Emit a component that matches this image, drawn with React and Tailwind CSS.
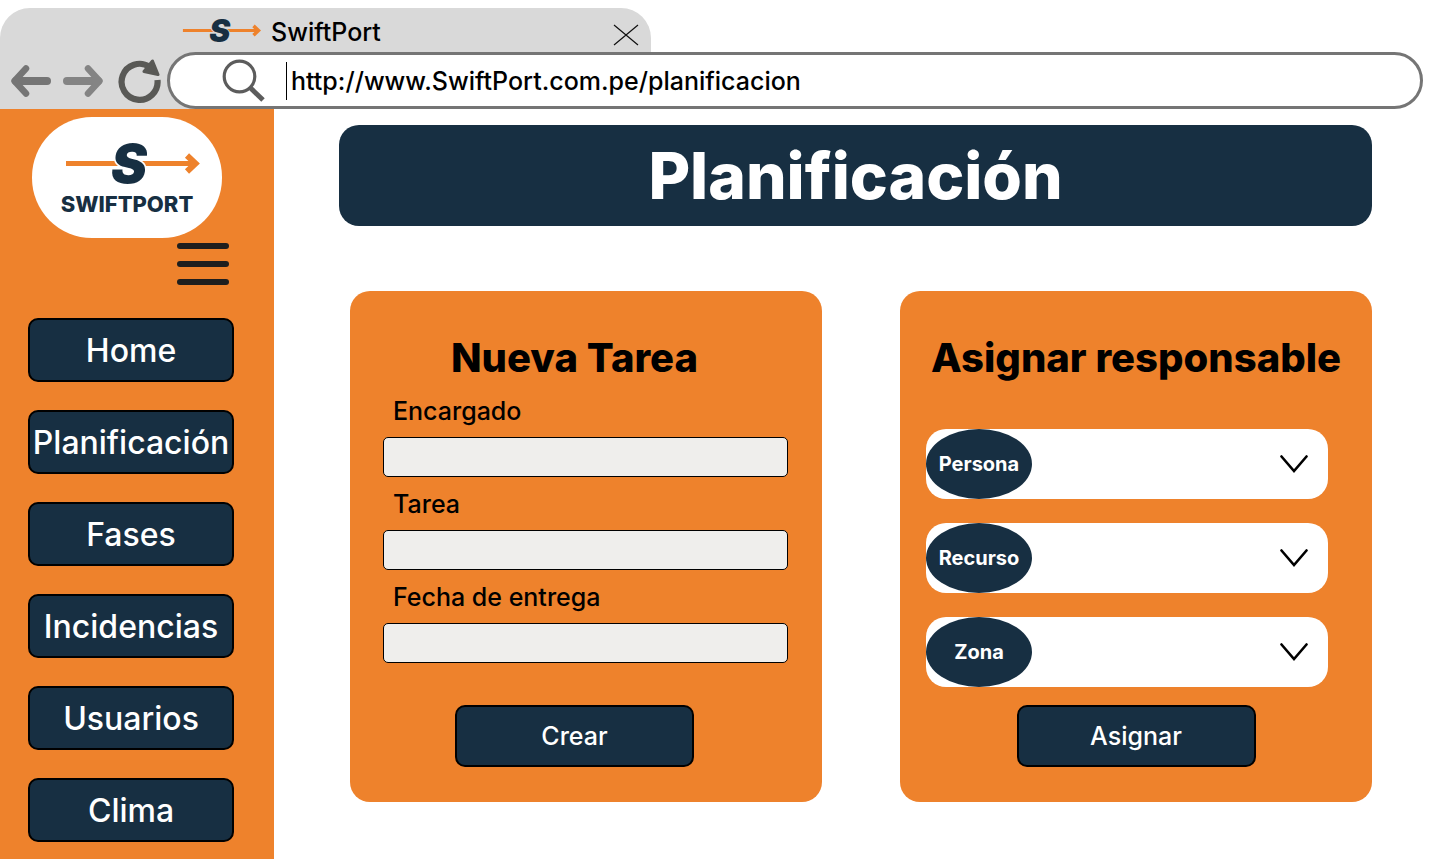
const menuItems = ['Home', 'Planificación', 'Fases', 'Incidencias', 'Usuarios', 'Clima'];
const taskFields = [
  { id: 'encargado', label: 'Encargado' },
  { id: 'tarea', label: 'Tarea' },
  { id: 'fecha', label: 'Fecha de entrega' },
];
const assignFields = [
  { id: 'persona', label: 'Persona' },
  { id: 'recurso', label: 'Recurso' },
  { id: 'zona', label: 'Zona' },
];

function ArrowS({ className, halo }) {
  return (
    <svg viewBox="-10 -2 144 48" className={className} overflow="visible" aria-hidden="true">
      <path d="M1 19.500H127" stroke="#ee822c" strokeWidth="5" fill="none" />
      <path d="M122 11.500l8.500 8-8.500 8" stroke="#ee822c" strokeWidth="6" fill="none" />
      <text
        x="64"
        y="39"
        textAnchor="middle"
        fontFamily="Inter, sans-serif"
        fontSize="54"
        fontWeight="900"
        fontStyle="italic"
        fill="#172f42"
        stroke={halo}
        strokeWidth="3"
        paintOrder="stroke"
      >
        S
      </text>
    </svg>
  );
}

function BackArrow({ className }) {
  return (
    <svg viewBox="0 0 40 32" className={className} fill="none" stroke="currentColor" aria-hidden="true">
      <path d="M5 16H36" strokeWidth="8" strokeLinecap="round" />
      <path d="M15 3.500L3.500 16 15 28.500" strokeWidth="6.500" strokeLinecap="round" strokeLinejoin="round" />
    </svg>
  );
}

function BrowserBar() {
  return (
    <header className="pt-2">
      <div className="flex h-11 w-[651px] max-w-full items-center rounded-t-[30px] bg-[#d9d9d9] pl-[176px] pr-3 pt-1">
        <ArrowS className="h-7 w-[85px]" halo="#d9d9d9" />
        <span className="ml-[10px] flex-1 text-[25px] font-medium leading-8">SwiftPort</span>
        <button type="button" aria-label="Cerrar pestaña" className="mt-[6px]">
          <svg viewBox="0 0 26 22" className="h-[22px] w-[26px]" stroke="#111" strokeWidth="1.200" aria-hidden="true">
            <path d="M1 1l24 20M25 1L1 21" />
          </svg>
        </button>
      </div>
      <div className="flex h-[57px]">
        <div className="flex w-[204px] shrink-0 items-center bg-[#d9d9d9] pl-[11px]">
          <button type="button" aria-label="Atrás" className="text-[#757575]">
            <BackArrow className="h-8 w-10" />
          </button>
          <button type="button" aria-label="Adelante" className="ml-3 text-[#848484]">
            <BackArrow className="h-8 w-10 rotate-180" />
          </button>
          <button type="button" aria-label="Recargar" className="ml-[15px]">
            <svg viewBox="0 0 44 44" className="size-11" fill="none" aria-hidden="true">
              <path d="M31.500 7.800A18 18 0 1 0 39.500 21" stroke="#595956" strokeWidth="6.200" />
              <path
                d="M34.500 2L40 15.500 26 12.500Z"
                fill="#595956"
                stroke="#595956"
                strokeWidth="3"
                strokeLinejoin="round"
              />
            </svg>
          </button>
        </div>
        <div className="-ml-[37px] mr-[17px] flex flex-1 items-center rounded-full border-3 border-[#757575] bg-white pl-[52px] pr-8">
          <svg viewBox="0 0 44 44" className="size-11 shrink-0" fill="none" stroke="#5c5c5c" aria-hidden="true">
            <circle cx="17.500" cy="17.500" r="15.300" strokeWidth="3.200" />
            <path d="M28 28.500L41 41" strokeWidth="5" />
          </svg>
          <div className="ml-5 flex h-[38px] flex-1 items-center border-l border-black">
            <input
              aria-label="Dirección"
              defaultValue="http://www.SwiftPort.com.pe/planificacion"
              className="w-full bg-transparent pl-1 text-[25px] font-medium leading-8 outline-none"
            />
          </div>
        </div>
      </div>
    </header>
  );
}

function Sidebar() {
  return (
    <aside className="w-[274px] shrink-0 bg-[#ee822c] px-7 pb-[18px] pt-2">
      <div className="ml-1 flex h-[121px] w-[190px] flex-col items-center rounded-[60px] bg-white pt-[25px]">
        <ArrowS className="h-12 w-36" halo="#ffffff" />
        <span className="-mt-[2px] text-[22px] font-extrabold leading-8 text-[#172f42]">SWIFTPORT</span>
      </div>
      <button type="button" aria-label="Menú" className="ml-[149px] mt-[5px] flex w-[52px] flex-col gap-3">
        <span className="h-[6px] w-full rounded-full bg-[#1e1e1e]" />
        <span className="h-[6px] w-full rounded-full bg-[#1e1e1e]" />
        <span className="h-[6px] w-full rounded-full bg-[#1e1e1e]" />
      </button>
      <nav className="mt-[33px] flex flex-col gap-7">
        {menuItems.map((item) => (
          <a
            key={item}
            href="#"
            className="flex h-16 w-[206px] items-center justify-center rounded-[10px] border-2 border-black bg-[#172f42] pt-[2px] text-[32px] font-medium leading-10 text-white"
          >
            {item}
          </a>
        ))}
      </nav>
    </aside>
  );
}

function SubmitButton({ children }) {
  return (
    <button
      type="button"
      className="h-[62px] w-[239px] rounded-[10px] border-2 border-black bg-[#172f42] text-[25px] font-medium leading-8 text-white"
    >
      {children}
    </button>
  );
}

function TaskCard() {
  return (
    <form className="flex flex-col rounded-[20px] bg-[#ee822c] pb-[35px] pl-[33px] pr-[34px] pt-[42px]">
      <h2 className="pr-[22px] text-center text-[40px] font-extrabold leading-[50px]">Nueva Tarea</h2>
      <div className="mt-3 flex flex-col gap-[11px]">
        {taskFields.map((field) => (
          <div key={field.id} className="flex flex-col gap-[10px]">
            <label htmlFor={field.id} className="pl-[10px] text-[25px] font-medium leading-8">
              {field.label}
            </label>
            <input id={field.id} type="text" className="h-10 w-full rounded-[5px] border border-black bg-[#efeeec] px-3" />
          </div>
        ))}
      </div>
      <div className="mt-auto flex justify-center pr-[22px]">
        <SubmitButton>Crear</SubmitButton>
      </div>
    </form>
  );
}

function AssignCard() {
  return (
    <form className="flex flex-col rounded-[20px] bg-[#ee822c] pb-[35px] pt-[42px]">
      <h2 className="text-center text-[40px] font-extrabold leading-[50px]">Asignar responsable</h2>
      <div className="mt-[46px] flex flex-col gap-6 pl-[26px] pr-[44px]">
        {assignFields.map((field) => (
          <div key={field.id} className="relative flex h-[70px] items-center rounded-[20px] bg-white">
            <label
              htmlFor={field.id}
              className="flex h-full w-[106px] shrink-0 items-center justify-center rounded-[50%] bg-[#172f42] text-[20px] font-bold text-white"
            >
              {field.label}
            </label>
            <select id={field.id} className="h-full flex-1 appearance-none bg-transparent pl-4 pr-16 text-xl outline-none">
              <option value="" />
            </select>
            <svg
              viewBox="0 0 28 18"
              className="pointer-events-none absolute right-5 h-[18px] w-7"
              fill="none"
              stroke="#000"
              strokeWidth="2.600"
              strokeLinecap="round"
              aria-hidden="true"
            >
              <path d="M1.500 1.500L14 16 26.500 1.500" />
            </svg>
          </div>
        ))}
      </div>
      <div className="mt-auto flex justify-center pt-4">
        <SubmitButton>Asignar</SubmitButton>
      </div>
    </form>
  );
}

export default function App() {
  return (
    <div className="flex min-h-screen flex-col bg-white font-['Inter',sans-serif] text-black">
      <BrowserBar />
      <div className="flex flex-1">
        <Sidebar />
        <main className="flex-1 pl-[65px] pr-[68px] pt-4">
          <h1 className="rounded-[20px] bg-[#172f42] py-[10px] text-center text-[64px] font-extrabold leading-[81px] text-white">
            Planificación
          </h1>
          <div className="ml-[11px] mt-[65px] grid min-h-[511px] grid-cols-2 gap-[78px]">
            <TaskCard />
            <AssignCard />
          </div>
        </main>
      </div>
    </div>
  );
}
